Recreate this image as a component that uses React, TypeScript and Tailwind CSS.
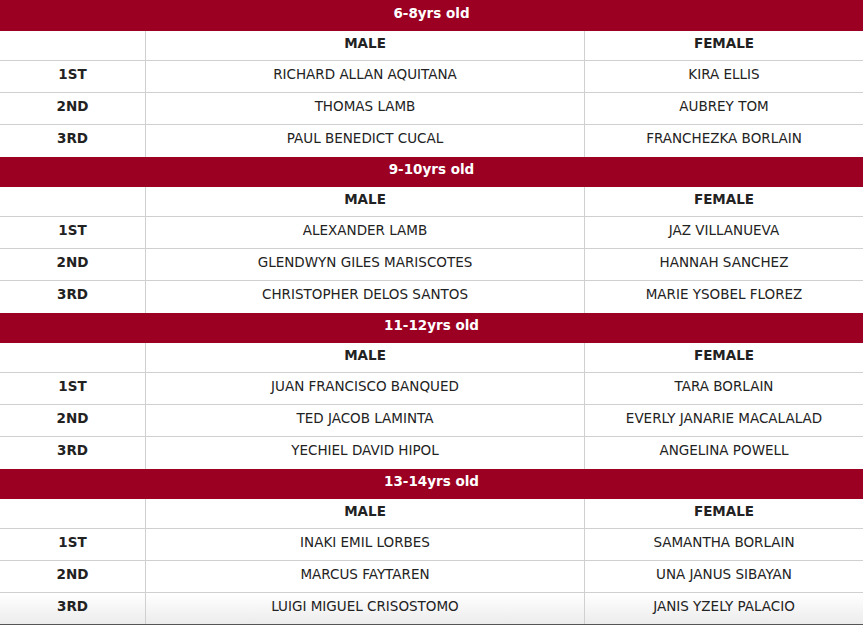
import React from 'react';

interface Group {
  title: string;
  rows: [string, string, string][];
}

const groups: Group[] = [
  {
    title: '6-8yrs old',
    rows: [
      ['1ST', 'RICHARD ALLAN AQUITANA', 'KIRA ELLIS'],
      ['2ND', 'THOMAS LAMB', 'AUBREY TOM'],
      ['3RD', 'PAUL BENEDICT CUCAL', 'FRANCHEZKA BORLAIN'],
    ],
  },
  {
    title: '9-10yrs old',
    rows: [
      ['1ST', 'ALEXANDER LAMB', 'JAZ VILLANUEVA'],
      ['2ND', 'GLENDWYN GILES MARISCOTES', 'HANNAH SANCHEZ'],
      ['3RD', 'CHRISTOPHER DELOS SANTOS', 'MARIE YSOBEL FLOREZ'],
    ],
  },
  {
    title: '11-12yrs old',
    rows: [
      ['1ST', 'JUAN FRANCISCO BANQUED', 'TARA BORLAIN'],
      ['2ND', 'TED JACOB LAMINTA', 'EVERLY JANARIE MACALALAD'],
      ['3RD', 'YECHIEL DAVID HIPOL', 'ANGELINA POWELL'],
    ],
  },
  {
    title: '13-14yrs old',
    rows: [
      ['1ST', 'INAKI EMIL LORBES', 'SAMANTHA BORLAIN'],
      ['2ND', 'MARCUS FAYTAREN', 'UNA JANUS SIBAYAN'],
      ['3RD', 'LUIGI MIGUEL CRISOSTOMO', 'JANIS YZELY PALACIO'],
    ],
  },
];

const App = () => {
  return (
    <div className="w-[863px] h-[625px] overflow-hidden bg-white text-[13.5px] text-[#222] font-['DejaVu_Sans',Verdana,sans-serif]">
      {groups.map((group, gi) => (
        <div key={group.title}>
          <div className={`flex items-center justify-center pb-[5px] bg-[#9b0022] text-white font-bold ${gi === 0 ? 'h-[31px]' : 'h-[30px]'}`}>
            {group.title}
          </div>
          <div className="grid grid-cols-[146px_439px_1fr] h-[30px] border-b border-[#d0d0d0]">
            <div className="border-r border-[#d0d0d0]" />
            <div className="flex items-center justify-center pb-[5px] font-bold border-r border-[#d0d0d0]">MALE</div>
            <div className="flex items-center justify-center pb-[5px] font-bold">FEMALE</div>
          </div>
          {group.rows.map(([place, male, female], ri) => {
            const last = gi === groups.length - 1 && ri === group.rows.length - 1;
            return (
              <div
                key={place}
                className={`grid grid-cols-[146px_439px_1fr] h-[32px] ${
                  last
                    ? 'bg-gradient-to-b from-white to-[#ececec] border-b border-[#555]'
                    : ri < group.rows.length - 1
                    ? 'border-b border-[#d0d0d0]'
                    : ''
                }`}
              >
                <div className="flex items-center justify-center pb-[5px] font-bold border-r border-[#d0d0d0]">{place}</div>
                <div className="flex items-center justify-center pb-[5px] border-r border-[#d0d0d0]">{male}</div>
                <div className="flex items-center justify-center pb-[5px]">{female}</div>
              </div>
            );
          })}
        </div>
      ))}
    </div>
  );
};

export default App;
